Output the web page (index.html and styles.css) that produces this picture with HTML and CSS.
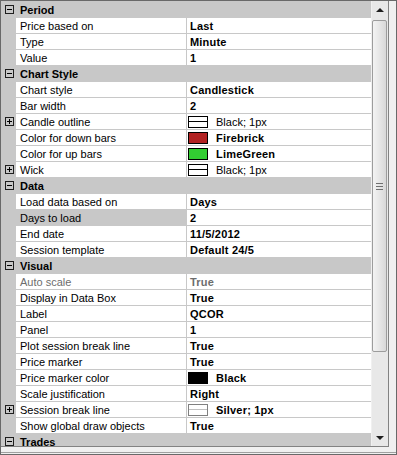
FILE: index.html
```html
<!DOCTYPE html>
<html lang="en">
<head>
    <meta charset="UTF-8">
    <title>Chart Properties</title>
    <link rel="stylesheet" href="styles.css">
</head>
<body>

<div class="frame">
    <div class="grid">
        <div class="rows">

            <!-- Period -->
            <div class="cat"><span class="gut"><i class="box minus"></i></span><span class="cat-name">Period</span></div>
            <div class="row"><span class="gut"></span><span class="name">Price based on</span><span class="val">Last</span></div>
            <div class="row"><span class="gut"></span><span class="name">Type</span><span class="val">Minute</span></div>
            <div class="row"><span class="gut"></span><span class="name">Value</span><span class="val">1</span></div>

            <!-- Chart Style -->
            <div class="cat"><span class="gut"><i class="box minus"></i></span><span class="cat-name">Chart Style</span></div>
            <div class="row"><span class="gut"></span><span class="name">Chart style</span><span class="val">Candlestick</span></div>
            <div class="row"><span class="gut"></span><span class="name">Bar width</span><span class="val">2</span></div>
            <div class="row"><span class="gut"><i class="box plus"></i></span><span class="name">Candle outline</span><span class="val"><i class="swatch line-black"></i><span class="plain">Black; 1px</span></span></div>
            <div class="row"><span class="gut"></span><span class="name">Color for down bars</span><span class="val"><i class="swatch firebrick"></i>Firebrick</span></div>
            <div class="row"><span class="gut"></span><span class="name">Color for up bars</span><span class="val"><i class="swatch limegreen"></i>LimeGreen</span></div>
            <div class="row"><span class="gut"><i class="box plus"></i></span><span class="name">Wick</span><span class="val"><i class="swatch line-black"></i><span class="plain">Black; 1px</span></span></div>

            <!-- Data -->
            <div class="cat"><span class="gut"><i class="box minus"></i></span><span class="cat-name">Data</span></div>
            <div class="row"><span class="gut"></span><span class="name">Load data based on</span><span class="val">Days</span></div>
            <div class="row selected"><span class="gut"></span><span class="name">Days to load</span><span class="val">2</span></div>
            <div class="row"><span class="gut"></span><span class="name">End date</span><span class="val">11/5/2012</span></div>
            <div class="row"><span class="gut"></span><span class="name">Session template</span><span class="val">Default 24/5</span></div>

            <!-- Visual -->
            <div class="cat"><span class="gut"><i class="box minus"></i></span><span class="cat-name">Visual</span></div>
            <div class="row readonly"><span class="gut"></span><span class="name">Auto scale</span><span class="val">True</span></div>
            <div class="row"><span class="gut"></span><span class="name">Display in Data Box</span><span class="val">True</span></div>
            <div class="row"><span class="gut"></span><span class="name">Label</span><span class="val">QCOR</span></div>
            <div class="row"><span class="gut"></span><span class="name">Panel</span><span class="val">1</span></div>
            <div class="row"><span class="gut"></span><span class="name">Plot session break line</span><span class="val">True</span></div>
            <div class="row"><span class="gut"></span><span class="name">Price marker</span><span class="val">True</span></div>
            <div class="row"><span class="gut"></span><span class="name">Price marker color</span><span class="val"><i class="swatch black"></i>Black</span></div>
            <div class="row"><span class="gut"></span><span class="name">Scale justification</span><span class="val">Right</span></div>
            <div class="row"><span class="gut"><i class="box plus"></i></span><span class="name">Session break line</span><span class="val"><i class="swatch line-silver"></i>Silver; 1px</span></div>
            <div class="row"><span class="gut"></span><span class="name">Show global draw objects</span><span class="val">True</span></div>

            <!-- Trades -->
            <div class="cat"><span class="gut"><i class="box minus"></i></span><span class="cat-name">Trades</span></div>
        </div>

        <!-- scrollbar -->
        <div class="scrollbar">
            <div class="arrow up"></div>
            <div class="track">
                <div class="thumb"><span class="grip"></span></div>
            </div>
            <div class="arrow down"></div>
        </div>
    </div>
    <div class="gap"></div>
    <div class="desc"></div>
</div>

</body>
</html>
```

FILE: styles.css
```css
body {
    margin: 0;
    background-color: #f0f0f0;
    font-family: "Liberation Sans", Arial, sans-serif;
    font-size: 11px;
    color: #000;
}

.frame {
    width: 397px;
    height: 455px;
    box-sizing: border-box;
    border: 1px solid #696969;
    background-color: #f0f0f0;
    display: flex;
    flex-direction: column;
}

.grid {
    display: flex;
    width: 388px;
    height: 446px;
    box-sizing: border-box;
    border-right: 1px solid #828282;
    border-bottom: 1px solid #828282;
    background-color: #c8c8c8;
    overflow: hidden;
    flex-shrink: 0;
}

.rows {
    width: 371px;
    padding-top: 1px;
    overflow: hidden;
}

/* rows */
.row, .cat {
    display: flex;
    height: 16px;
    box-sizing: border-box;
    border-bottom: 1px solid #c8c8c8;
    line-height: 16px;
    white-space: nowrap;
}

.gut {
    width: 15px;
    flex-shrink: 0;
    display: flex;
    align-items: center;
    justify-content: center;
    padding-left: 2px;
    box-sizing: border-box;
}

.cat {
    background-color: #c8c8c8;
}

.cat-name {
    padding-left: 4px;
    font-weight: bold;
}

.name {
    width: 171px;
    flex-shrink: 0;
    padding-left: 4px;
    box-sizing: border-box;
    background-color: #fff;
    border-right: 1px solid #c8c8c8;
    overflow: hidden;
}

.val {
    flex: 1;
    padding-left: 3px;
    background-color: #fff;
    font-weight: bold;
    letter-spacing: 0.2px;
    display: flex;
    align-items: flex-start;
    overflow: hidden;
}

.plain {
    font-weight: normal;
    letter-spacing: 0;
}

.selected .name {
    background-color: #c8c8c8;
}

.readonly .name, .readonly .val {
    color: #6d6d6d;
}

/* expand / collapse boxes */
.box {
    position: relative;
    width: 9px;
    height: 9px;
    box-sizing: border-box;
    border: 1px solid #1e1e1e;
}

.box::before {
    content: "";
    position: absolute;
    left: 1px;
    top: 3px;
    width: 5px;
    height: 1px;
    background-color: #000;
}

.plus::after {
    content: "";
    position: absolute;
    left: 3px;
    top: 1px;
    width: 1px;
    height: 5px;
    background-color: #000;
}

/* colour / line swatches */
.swatch {
    position: relative;
    width: 20px;
    height: 12px;
    box-sizing: border-box;
    border: 1px solid #000;
    margin: 2px 8px 0 -2px;
    flex-shrink: 0;
}

.firebrick { background-color: #b22222; }
.limegreen { background-color: #32cd32; }
.black { background-color: #000; }

.line-black, .line-silver {
    background-color: #fff;
}

.line-black::after, .line-silver::after {
    content: "";
    position: absolute;
    left: 0;
    right: 0;
    top: 4px;
    height: 1px;
    background-color: #000;
}

.line-silver {
    border-color: #808080;
}

.line-silver::after {
    background-color: #c0c0c0;
}

/* scrollbar */
.scrollbar {
    width: 16px;
    display: flex;
    flex-direction: column;
    background-color: #e8e8e8;
    border-left: 1px solid #f0f0f0;
}

.arrow {
    height: 17px;
    display: flex;
    align-items: center;
    justify-content: center;
    flex-shrink: 0;
}

.arrow::before {
    content: "";
    width: 0;
    height: 0;
    border-left: 4px solid transparent;
    border-right: 4px solid transparent;
}

.up::before {
    border-bottom: 4px solid #1e1e1e;
}

.down::before {
    border-top: 4px solid #1e1e1e;
}

.track {
    flex: 1;
    padding-top: 2px;
}

.thumb {
    width: 15px;
    height: 332px;
    box-sizing: border-box;
    border: 1px solid #9c9c9c;
    border-radius: 2px;
    background: linear-gradient(to right, #f3f3f3, #e6e6e6 50%, #d8d8d8);
    display: flex;
    align-items: center;
    justify-content: center;
}

.grip {
    width: 7px;
    height: 5px;
    border-top: 1px solid #6f6f6f;
    border-bottom: 1px solid #6f6f6f;
    position: relative;
}

.grip::after {
    content: "";
    position: absolute;
    left: 0;
    right: 0;
    top: 2px;
    height: 1px;
    background-color: #6f6f6f;
}

.gap {
    height: 5px;
    flex-shrink: 0;
}

.desc {
    flex: 1;
    border-top: 1px solid #a0a0a0;
}
```
